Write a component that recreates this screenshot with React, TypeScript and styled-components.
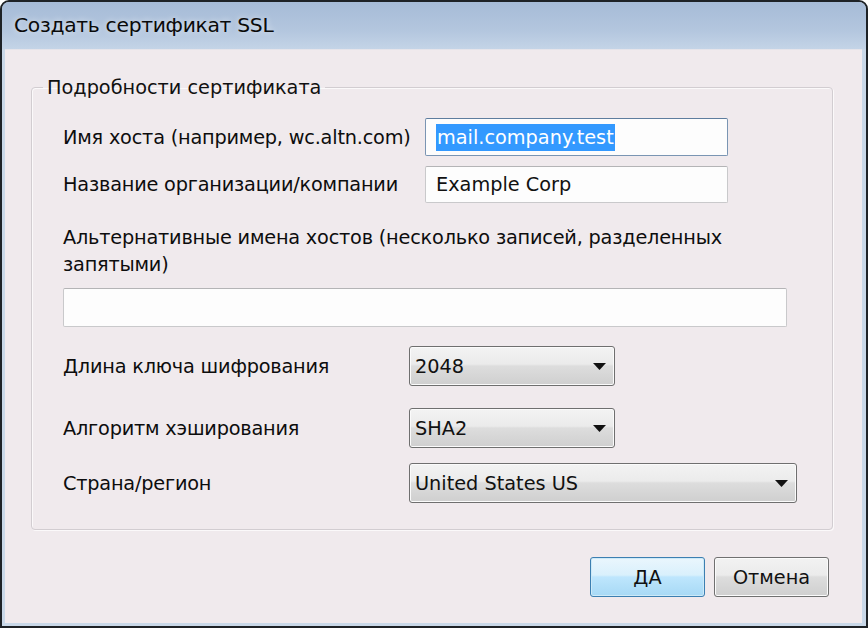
import React from "react";
import styled, { createGlobalStyle } from "styled-components";

const Global = createGlobalStyle`
  html, body { margin: 0; padding: 0; background: #ffffff; }
  body { font-family: "DejaVu Sans", "Liberation Sans", sans-serif; }
`;

const FONT = "19.3px";

const Window = styled.div`
  width: 868px;
  height: 628px;
  box-sizing: border-box;
  border: 2px solid #1e2226;
  border-radius: 9px 9px 0 0;
  overflow: hidden;
  display: flex;
  flex-direction: column;
  background: #c9d8e8;
`;

const TitleBar = styled.div`
  height: 47px;
  flex: none;
  display: flex;
  align-items: center;
  padding-left: 12px;
  padding-bottom: 1px;
  box-sizing: border-box;
  background: linear-gradient(#a6bbd7, #b3c6de 60%, #c4d4e7);
  font-size: 20.3px;
  color: #0a0a0a;
  text-shadow: 0 0 6px rgba(255, 255, 255, 0.7);
  letter-spacing: -0.3px;
`;

const Client = styled.div`
  flex: 1;
  margin: 0 4px 3px 3px;
  background: #f0eaed;
  display: flex;
  flex-direction: column;
  padding: 26px 29px 0 26px;
  border-top: 1px solid #e6e4ea;
`;

const Group = styled.fieldset`
  margin: 0;
  padding: 0 0 26px 31px;
  border: 1px solid #d2cdd1;
  border-radius: 4px;
  box-shadow: inset 1px 1px 0 #fbf9fa, 1px 1px 0 #fbf9fa;
`;

const Legend = styled.legend`
  font-size: ${FONT};
  color: #111;
  padding: 0 4px;
  margin-left: -20px;
`;

const Row = styled.div<{ $labelWidth: number; $mt: number }>`
  display: flex;
  align-items: center;
  margin-top: ${(p) => p.$mt}px;
  & > label {
    width: ${(p) => p.$labelWidth}px;
    flex: none;
  }
`;

const Label = styled.label`
  font-size: ${FONT};
  color: #0d0d0d;
  letter-spacing: -0.2px;
  white-space: nowrap;
`;

const WideLabel = styled.label<{ $mt: number }>`
  display: block;
  width: 724px;
  margin-top: ${(p) => p.$mt}px;
  font-size: ${FONT};
  color: #0d0d0d;
  letter-spacing: -0.2px;
  line-height: 27px;
`;

const TextBox = styled.div<{ $w: number; $h: number; $focus?: boolean; $mt?: number }>`
  width: ${(p) => p.$w}px;
  height: ${(p) => p.$h}px;
  margin-top: ${(p) => p.$mt ?? 0}px;
  box-sizing: border-box;
  border: 1px solid ${(p) => (p.$focus ? "#7a95b3" : "#c9c9cb")};
  border-top-color: ${(p) => (p.$focus ? "#5e7d9e" : "#b4b4b6")};
  border-radius: 2px;
  background: #fdfdfd;
  display: flex;
  align-items: center;
  padding-left: 10px;
  font-size: ${FONT};
  color: #111;
`;

const Selected = styled.span`
  background: #3399ff;
  color: #fff;
  line-height: 27px;
  padding: 0 1px;
`;

const Select = styled.div<{ $w: number }>`
  width: ${(p) => p.$w}px;
  height: 40px;
  box-sizing: border-box;
  border: 1px solid #6f6f6f;
  border-radius: 3px;
  background: linear-gradient(#f3f3f3, #ebebeb 45%, #dddddd 50%, #cfcfcf);
  box-shadow: inset 0 0 0 1px #fbfbfb;
  display: flex;
  align-items: center;
  justify-content: space-between;
  padding: 0 8px 0 5px;
  font-size: ${FONT};
  color: #111;
`;

const Arrow = () => (
  <svg width="13" height="7" viewBox="0 0 13 7">
    <path d="M0 0H13L6.5 7Z" fill="#111" />
  </svg>
);

const Buttons = styled.div`
  display: flex;
  justify-content: flex-end;
  gap: 9px;
  margin-top: 27px;
  padding-right: 4px;
`;

const Button = styled.div<{ $default?: boolean }>`
  width: 115px;
  height: 40px;
  box-sizing: border-box;
  border: 1px solid ${(p) => (p.$default ? "#3c7fb1" : "#707070")};
  border-radius: 3px;
  background: ${(p) =>
    p.$default
      ? "linear-gradient(#eaf6fd, #d9f0fc 45%, #bee6fd 50%, #a7d9f5)"
      : "linear-gradient(#f2f2f2, #ebebeb 45%, #dddddd 50%, #cfcfcf)"};
  box-shadow: inset 0 0 0 1px ${(p) => (p.$default ? "#cdeaf8" : "#fbfbfb")};
  display: flex;
  align-items: center;
  justify-content: center;
  font-size: ${FONT};
  color: #111;
`;

export default function App() {
  return (
    <>
      <Global />
      <Window>
        <TitleBar>Создать сертификат SSL</TitleBar>
        <Client>
          <Group>
            <Legend>Подробности сертификата</Legend>
            <Row $labelWidth={362} $mt={19}>
              <Label>Имя хоста (например, wc.altn.com)</Label>
              <TextBox $w={303} $h={38} $focus>
                <Selected>mail.company.test</Selected>
              </TextBox>
            </Row>
            <Row $labelWidth={362} $mt={10}>
              <Label>Название организации/компании</Label>
              <TextBox $w={303} $h={37}>Example Corp</TextBox>
            </Row>
            <WideLabel $mt={21}>
              Альтернативные имена хостов (несколько записей, разделенных
              запятыми)
            </WideLabel>
            <TextBox $w={724} $h={39} $mt={10} />
            <Row $labelWidth={346} $mt={19}>
              <Label>Длина ключа шифрования</Label>
              <Select $w={206}>
                2048
                <Arrow />
              </Select>
            </Row>
            <Row $labelWidth={346} $mt={22}>
              <Label>Алгоритм хэширования</Label>
              <Select $w={206}>
                SHA2
                <Arrow />
              </Select>
            </Row>
            <Row $labelWidth={346} $mt={15}>
              <Label>Страна/регион</Label>
              <Select $w={388}>
                United States US
                <Arrow />
              </Select>
            </Row>
          </Group>
          <Buttons>
            <Button $default>ДА</Button>
            <Button>Отмена</Button>
          </Buttons>
        </Client>
      </Window>
    </>
  );
}
